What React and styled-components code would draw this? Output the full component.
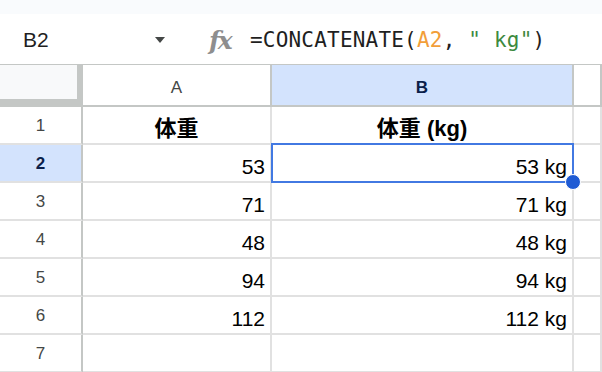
import styled, { createGlobalStyle } from 'styled-components';

const GlobalStyle = createGlobalStyle`
  html, body {
    margin: 0;
    padding: 0;
    background: #ffffff;
    font-family: "Liberation Sans", Arial, "Noto Sans CJK SC", sans-serif;
    overflow: hidden;
  }
`;

const Page = styled.div`
  width: 602px;
  height: 372px;
  overflow: hidden;
  background: #ffffff;
`;

const TopStrip = styled.div`
  height: 14px;
  background: #f9fbfd;
`;

const FormulaBar = styled.div`
  display: flex;
  align-items: center;
  height: 51px;
  padding-top: 2px;
  border-bottom: 1px solid #c4c7c5;
  box-sizing: border-box;
`;

const NameBox = styled.div`
  width: 175px;
  box-sizing: border-box;
  padding: 0 10px 0 23px;
  display: flex;
  align-items: center;
  justify-content: space-between;
  font-size: 21px;
  color: #1f1f1f;
`;

const Caret = styled.span`
  width: 0;
  height: 0;
  border-left: 5px solid transparent;
  border-right: 5px solid transparent;
  border-top: 6px solid #444746;
`;

const FxIcon = styled.span`
  margin-left: 34px;
  width: 26px;
  font-family: "DejaVu Serif", "Liberation Serif", serif;
  font-style: italic;
  font-weight: 700;
  font-size: 25px;
  letter-spacing: -2px;
  color: #8e8e8e;
`;

const FormulaText = styled.div`
  margin-left: 15px;
  font-family: "DejaVu Sans Mono", "Liberation Mono", monospace;
  font-size: 21px;
  letter-spacing: 0.2px;
  color: #1f1f1f;
  white-space: pre;
`;

const Ref = styled.span`
  color: ${(p) => (p.$kind === 'str' ? '#3d8a3f' : '#f29e39')};
`;

const Grid = styled.div`
  display: grid;
  grid-template-columns: 83px 189px 302px 1fr;
  grid-template-rows: 42px repeat(7, 38px);
`;

const Corner = styled.div`
  box-sizing: border-box;
  background: #f8f9fa;
  border-right: 6px solid #c4c7c5;
  border-bottom: 8px solid #c4c7c5;
`;

const ColHead = styled.div`
  box-sizing: border-box;
  display: flex;
  align-items: center;
  justify-content: center;
  padding-top: 5px;
  border-right: 2px solid #c4c7c5;
  border-bottom: 2px solid #c4c7c5;
  background: ${(p) => (p.$active ? '#d3e3fd' : '#ffffff')};
  color: ${(p) => (p.$active ? '#0b1f4a' : '#444746')};
  font-weight: ${(p) => (p.$active ? 700 : 400)};
  font-size: 17px;
`;

const RowHead = styled.div`
  box-sizing: border-box;
  display: flex;
  align-items: center;
  justify-content: center;
  padding-top: 2px;
  border-right: 2px solid #c4c7c5;
  border-bottom: 2px solid #e1e1e1;
  background: ${(p) => (p.$active ? '#d3e3fd' : '#ffffff')};
  color: ${(p) => (p.$active ? '#0b1f4a' : '#444746')};
  font-weight: ${(p) => (p.$active ? 700 : 400)};
  font-size: 17px;
`;

const Cell = styled.div`
  position: relative;
  z-index: ${(p) => (p.$selected ? 2 : 0)};
  box-sizing: border-box;
  display: flex;
  align-items: ${(p) => (p.$head ? 'center' : 'flex-end')};
  justify-content: ${(p) => (p.$head ? 'center' : 'flex-end')};
  padding: ${(p) => (p.$head ? '8px 0 0' : '0 5px 2px 0')};
  border-right: 2px solid #e1e1e1;
  border-bottom: 2px solid #e1e1e1;
  font-size: ${(p) => (p.$head ? '22px' : '21px')};
  line-height: 24px;
  font-weight: ${(p) => (p.$head ? 700 : 400)};
  color: #000000;
  white-space: nowrap;
`;

const Selection = styled.div`
  position: absolute;
  left: -1px;
  top: -2px;
  right: -2px;
  bottom: -2px;
  border: 2px solid #4279e2;
  pointer-events: none;
`;

const Handle = styled.div`
  position: absolute;
  right: -9px;
  bottom: -9px;
  width: 14px;
  height: 14px;
  border-radius: 50%;
  background: #1f5bd4;
  border: 1px solid #ffffff;
`;

const rows = [
  ['体重', '体重 (kg)'],
  ['53', '53 kg'],
  ['71', '71 kg'],
  ['48', '48 kg'],
  ['94', '94 kg'],
  ['112', '112 kg'],
  ['', ''],
];

export default function App() {
  return (
    <Page>
      <GlobalStyle />
      <TopStrip />
      <FormulaBar>
        <NameBox>
          <span>B2</span>
          <Caret />
        </NameBox>
        <FxIcon>fx</FxIcon>
        <FormulaText>
          =CONCATENATE(<Ref>A2</Ref>, <Ref $kind="str">" kg"</Ref>)
        </FormulaText>
      </FormulaBar>
      <Grid>
        <Corner />
        <ColHead>A</ColHead>
        <ColHead $active>B</ColHead>
        <ColHead />
        {rows.map((r, i) => {
          const head = i === 0;
          const active = i === 1;
          return [
            <RowHead key={`h${i}`} $active={active}>{i + 1}</RowHead>,
            <Cell key={`a${i}`} $head={head}>{r[0]}</Cell>,
            <Cell key={`b${i}`} $head={head} $selected={active}>
              {r[1]}
              {active && (
                <Selection>
                  <Handle />
                </Selection>
              )}
            </Cell>,
            <Cell key={`c${i}`} />,
          ];
        })}
      </Grid>
    </Page>
  );
}
